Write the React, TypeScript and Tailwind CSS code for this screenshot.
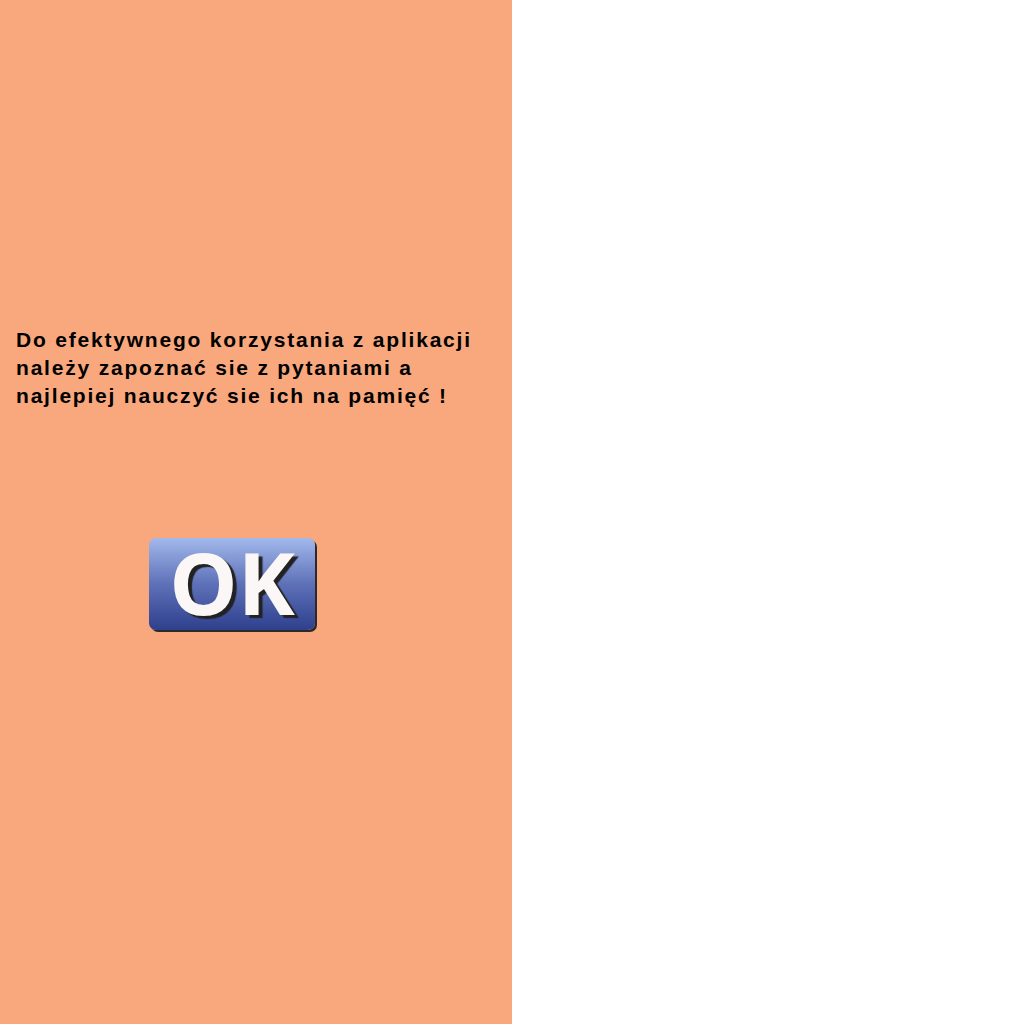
export default function App() {
  return (
    <div className="flex h-[1024px] w-[1024px] bg-white">
      <div className="flex w-[512px] flex-col bg-[#f8a87c]">
        <p className="mt-[326px] pl-4 [font-family:'Liberation_Sans',Arial,sans-serif] text-[21px] font-bold leading-[28px] tracking-[1.8px] text-black">
          Do efektywnego korzystania z aplikacji
          <br />
          należy zapoznać sie z pytaniami a
          <br />
          najlepiej nauczyć sie ich na pamięć !
        </p>
        <div className="mt-[128px] pl-[149px]">
          <button className="flex h-[92px] w-[166px] items-center justify-center rounded-[7px] bg-gradient-to-b from-[#a3b9ec] via-[#5e71b8] to-[#2f3f8c] pb-[4px] [font-family:'Open_Sans',sans-serif] text-[86px] font-bold leading-none text-[#fbf7f6] shadow-[2px_2px_0_#2a2a2a] [text-shadow:4px_3px_1px_#222]">
            OK
          </button>
        </div>
      </div>
    </div>
  );
}
